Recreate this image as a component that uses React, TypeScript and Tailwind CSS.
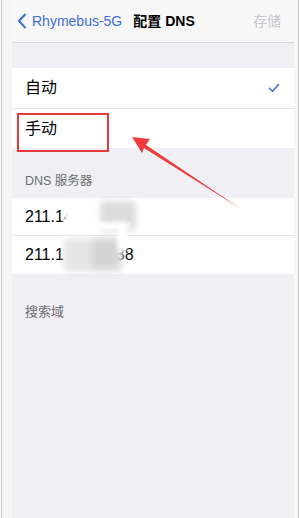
import React from 'react';

const font = { fontFamily: '"Liberation Sans", "Noto Sans CJK SC", sans-serif' };

const Check = () => (
  <svg width="12" height="10" viewBox="0 0 12 10" fill="none">
    <path d="M1.5 5.2 L4.5 8.2 L10.5 1.5" stroke="#3d6fd6" strokeWidth="1.6" strokeLinecap="round" strokeLinejoin="round" />
  </svg>
);

const Arrow = () => (
  <svg className="absolute left-0 top-0 pointer-events-none" width="300" height="518" viewBox="0 0 300 518">
    <polygon points="132,137 150,139 146,145 241,209 144,148 142,153" fill="#ee3b3b" />
  </svg>
);

export default function App() {
  return (
    <div className="flex w-[300px] h-[518px] bg-white overflow-hidden" style={font}>
      <div className="w-px bg-white" />
      <div className="w-px bg-[#c6c6c6]" />
      <div className="w-[10px] bg-[#f5f5f6]" />

      {/* screen */}
      <div className="relative flex w-[282px] flex-col bg-[#efeff4]">
        <header className="flex h-[43px] items-center border-b border-[#dadade] bg-[#f7f7f8] pl-[5px] pr-[13px]">
          <svg width="10" height="16" viewBox="0 0 10 16" fill="none">
            <path d="M8 1.5 L2 8 L8 14.5" stroke="#3d6fd6" strokeWidth="2" strokeLinecap="round" strokeLinejoin="round" />
          </svg>
          <span className="ml-[5px] text-[14px] text-[#3d6fd6]">Rhymebus-5G</span>
          <span className="ml-[11px] text-[14px] font-bold text-black">配置 DNS</span>
          <span className="ml-auto text-[14px] text-[#c7c7cc]">存储</span>
        </header>

        <div className="h-[25px]" />

        <div className="bg-white">
          <div className="flex h-[41px] items-center justify-between border-b border-[#e4e4e8] pl-[13px] pr-[14px]">
            <span className="text-[16px] text-black">自动</span>
            <Check />
          </div>
          <div className="flex h-[39px] items-center pl-[13px]">
            <span className="text-[16px] text-black">手动</span>
          </div>
        </div>

        <div className="flex h-[50px] items-end pb-[7px] pl-[13px]">
          <span className="text-[12.5px] text-[#6d6d72]">DNS 服务器</span>
        </div>

        <div className="bg-white">
          <div className="flex h-[38px] items-center border-b border-[#e4e4e8] pl-[13px]">
            <span className="text-[16px] text-black">211.14</span>
          </div>
          <div className="flex h-[38px] items-center pl-[13px]">
            <span className="text-[16px] text-black">211.1</span>
            <span className="ml-[52px] text-[16px] text-black">38</span>
          </div>
        </div>

        <div className="flex h-[76px] items-center pl-[13px]">
          <span className="text-[13px] text-[#6d6d72]">搜索域</span>
        </div>

        {/* blurred redaction */}
        <div className="absolute left-[52px] top-[200px] h-[34px] w-[24px] bg-white blur-[2px]" />
        <div className="absolute left-[88px] top-[201px] h-[30px] w-[36px] rounded-[6px] bg-[#dcdcdc] blur-[3px]" />
        <div className="absolute left-[52px] top-[238px] h-[34px] w-[58px] rounded-[4px] bg-[#e6e6e6] blur-[3px]" />
        <div className="absolute left-[80px] top-[240px] h-[28px] w-[26px] bg-[#d4d4d4] blur-[3px]" />
        <div className="absolute left-[58px] top-[222px] h-[8px] w-[60px] rounded-full bg-white blur-[2px]" />
        <div className="absolute left-[106px] top-[224px] h-[28px] w-[9px] rounded-full bg-white blur-[2px]" />

        {/* red highlight box */}
        <div className="absolute left-[5px] top-[113px] h-[39px] w-[92px] border-2 border-[#e83a3a]" />
      </div>

      <div className="w-[4px] bg-[#f7f7f8]" />
      <div className="w-px bg-[#c6c6c6]" />
      <div className="w-px bg-white" />

      <Arrow />
    </div>
  );
}
